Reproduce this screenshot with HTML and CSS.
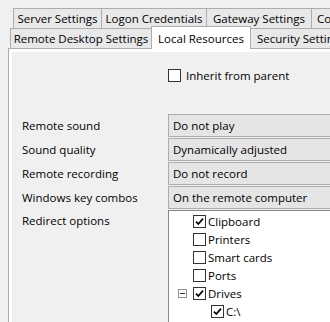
FILE: index.html
```html
<!DOCTYPE html>
<html>
<head>
<meta charset="utf-8">
<link rel="stylesheet" href="styles.css">
</head>
<body>
<div class="window">
  <div class="tabs">
    <div class="tabrow row1">
      <div class="tab t-server">Server Settings</div>
      <div class="tab t-logon">Logon Credentials</div>
      <div class="tab t-gateway">Gateway Settings</div>
      <div class="tab t-conn">Co</div>
    </div>
    <div class="tabrow row2">
      <div class="tab t-rds">Remote Desktop Settings</div>
      <div class="tab t-local active">Local Resources</div>
      <div class="tab t-sec">Security Settin</div>
    </div>
  </div>
  <div class="page">
    <div class="content">
      <div class="inherit">
        <span class="cb"></span>
        <span>Inherit from parent</span>
      </div>
      <div class="form">
        <div class="label">Remote sound</div>
        <div class="combo">Do not play</div>
        <div class="label">Sound quality</div>
        <div class="combo">Dynamically adjusted</div>
        <div class="label">Remote recording</div>
        <div class="combo">Do not record</div>
        <div class="label">Windows key combos</div>
        <div class="combo">On the remote computer</div>
        <div class="label label-top">Redirect options</div>
        <div class="tree">
          <div class="node">
            <span class="exp"></span>
            <span class="cb checked"><svg viewBox="0 0 11 11" width="11" height="11"><path d="M2 5.6 L4.3 8 L9 2.6" fill="none" stroke="#000" stroke-width="1.7"/></svg></span>
            <span class="txt">Clipboard</span>
          </div>
          <div class="node">
            <span class="exp"></span>
            <span class="cb"></span>
            <span class="txt">Printers</span>
          </div>
          <div class="node">
            <span class="exp"></span>
            <span class="cb"></span>
            <span class="txt">Smart cards</span>
          </div>
          <div class="node">
            <span class="exp"></span>
            <span class="cb"></span>
            <span class="txt">Ports</span>
          </div>
          <div class="node">
            <span class="exp"><span class="minus"></span></span>
            <span class="cb checked"><svg viewBox="0 0 11 11" width="11" height="11"><path d="M2 5.6 L4.3 8 L9 2.6" fill="none" stroke="#000" stroke-width="1.7"/></svg></span>
            <span class="txt">Drives</span>
          </div>
          <div class="node level2">
            <span class="exp"></span>
            <span class="cb checked"><svg viewBox="0 0 11 11" width="11" height="11"><path d="M2 5.6 L4.3 8 L9 2.6" fill="none" stroke="#000" stroke-width="1.7"/></svg></span>
            <span class="txt">C:\</span>
          </div>
        </div>
      </div>
    </div>
  </div>
</div>
</body>
</html>
```

FILE: styles.css
```css
html, body {
  margin: 0;
  padding: 0;
}
body {
  background: #f0f0f0;
  font-family: "Open Sans", "Noto Sans", sans-serif;
  font-size: 11.5px;
  color: #000;
  width: 330px;
  height: 322px;
  overflow: hidden;
}
.window {
  padding-top: 8px;
}
.tabrow {
  display: flex;
  height: 20px;
}
.row1 {
  margin-left: 13px;
}
.row2 {
  margin-left: 10px;
}
.tab {
  box-sizing: border-box;
  flex: none;
  height: 20px;
  border: 1px solid #adadad;
  border-bottom: none;
  background: #e8e8e8;
  display: flex;
  align-items: center;
  justify-content: center;
  white-space: nowrap;
  overflow: hidden;
}
.tab + .tab {
  margin-left: -1px;
}
.t-server { width: 89px; }
.t-logon { width: 106px; }
.t-gateway { width: 106px; }
.t-conn { width: 30px; justify-content: flex-start; padding-left: 5px; }
.t-rds { width: 142px; }
.t-local { width: 100px; }
.t-sec { width: 90px; justify-content: flex-start; padding-left: 6px; }
.tab.active {
  background: #fff;
  height: 23px;
  margin-top: -2px;
  position: relative;
  z-index: 1;
}
.page {
  margin-left: 8px;
  border-top: 1px solid #adadad;
  border-left: 1px solid #adadad;
  background: #fff;
  padding: 3px 0 0 3px;
  height: 300px;
}
.content {
  background: #f0f0f0;
  height: 300px;
  padding: 17px 0 0 10px;
  box-sizing: border-box;
}
.inherit {
  display: flex;
  align-items: center;
  gap: 5px;
  margin-left: 146px;
  height: 13px;
}
.cb {
  box-sizing: border-box;
  width: 13px;
  height: 13px;
  border: 1px solid #333;
  background: #fff;
  flex: none;
  display: flex;
  align-items: center;
  justify-content: center;
}
.cb svg {
  display: block;
}
.form {
  display: grid;
  grid-template-columns: 146px 170px;
  row-gap: 1px;
  margin-top: 32px;
}
.label {
  align-self: center;
  white-space: nowrap;
}
.label-top {
  align-self: start;
  padding-top: 3px;
}
.combo {
  box-sizing: border-box;
  height: 23px;
  border: 1px solid #acacac;
  border-right: none;
  background: #e5e5e5;
  padding-left: 4px;
  display: flex;
  align-items: center;
  white-space: nowrap;
}
.tree {
  box-sizing: border-box;
  border: 1px solid #828790;
  border-right: none;
  background: #fff;
  height: 120px;
  padding-top: 1px;
}
.node {
  height: 18px;
  display: flex;
  align-items: center;
  padding-left: 9px;
}
.node.level2 {
  padding-left: 27px;
}
.exp {
  width: 15px;
  flex: none;
  display: flex;
  align-items: center;
}
.minus {
  box-sizing: border-box;
  width: 9px;
  height: 9px;
  border: 1px solid #919191;
  background: #fff;
  display: flex;
  align-items: center;
  justify-content: center;
}
.minus::before {
  content: "";
  width: 5px;
  height: 1px;
  background: #333;
}
.txt {
  margin-left: 2px;
  white-space: nowrap;
}
```
